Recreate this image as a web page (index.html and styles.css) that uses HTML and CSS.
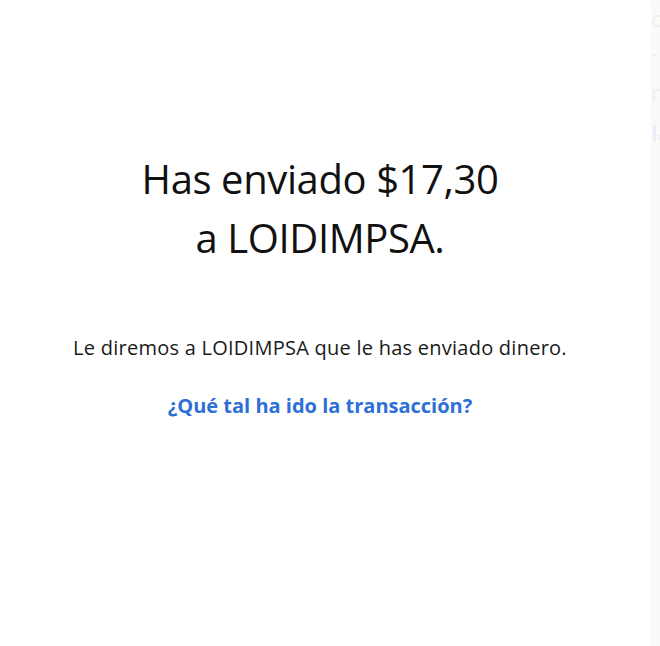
FILE: index.html
```html
<!DOCTYPE html>
<html lang="es">
<head>
<meta charset="utf-8">
<title>Pago enviado</title>
<link rel="stylesheet" href="styles.css">
</head>
<body>
<div class="screen">
  <main class="main">
    <h1 class="title">Has enviado $17,30<br>a LOIDIMPSA.</h1>
    <p class="info">Le diremos a LOIDIMPSA que le has enviado dinero.</p>
    <a class="link" href="#">¿Qué tal ha ido la transacción?</a>
  </main>
  <aside class="peek">
    <span class="peek-o">o</span>
    <span class="peek-dash">-</span>
    <span class="peek-n">n</span>
    <span class="peek-la">la</span>
  </aside>
</div>
</body>
</html>
```
FILE: styles.css
```css
html, body {
  margin: 0;
  padding: 0;
  background: #ffffff;
}
.screen {
  display: flex;
  width: 660px;
  height: 646px;
  overflow: hidden;
  font-family: "Open Sans", "Noto Sans", sans-serif;
}
.main {
  flex: 0 0 640px;
  display: flex;
  flex-direction: column;
  align-items: center;
  padding-top: 149px;
}
.title {
  margin: 0;
  font-size: 40px;
  line-height: 59px;
  font-weight: 400;
  color: #111111;
  text-align: center;
  letter-spacing: -0.4px;
}
.info {
  margin: 67px 0 0;
  font-size: 20px;
  line-height: 28px;
  color: #1a1a1a;
  text-align: center;
  letter-spacing: 0.25px;
}
.link {
  margin-top: 30px;
  font-size: 20px;
  line-height: 28px;
  font-weight: 700;
  color: #2d6fd7;
  text-decoration: none;
}
.peek {
  margin-left: 11px;
  flex: 0 0 9px;
  background: #fbfaf8;
  display: flex;
  flex-direction: column;
  font-size: 22px;
  color: #efeeec;
  overflow: hidden;
}
.peek-o { margin-top: 6px; line-height: 24px; }
.peek-dash { margin-top: 12px; line-height: 20px; }
.peek-n { margin-top: 16px; line-height: 28px; }
.peek-la { margin-top: 12px; line-height: 28px; color: #e8eef8; font-weight: 700; }
```
